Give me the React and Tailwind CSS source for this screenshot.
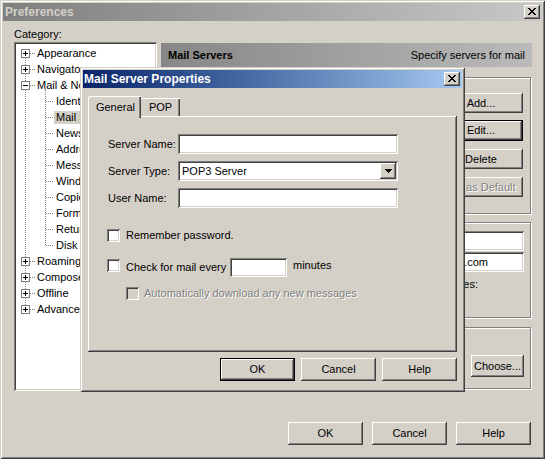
const raised =
  "shadow-[inset_-1px_-1px_0_#404040,inset_1px_1px_0_#ffffff,inset_-2px_-2px_0_#808080,inset_2px_2px_0_#d4d0c8]";
const sunken =
  "shadow-[inset_1px_1px_0_#808080,inset_-1px_-1px_0_#ffffff,inset_2px_2px_0_#404040,inset_-2px_-2px_0_#d4d0c8]";
const frame =
  "shadow-[inset_1px_1px_0_#d4d0c8,inset_-1px_-1px_0_#404040,inset_2px_2px_0_#ffffff,inset_-2px_-2px_0_#808080]";
const etched = "border border-[#808080] shadow-[inset_1px_1px_0_#ffffff,1px_1px_0_#ffffff]";
const disabledText = "text-[#808080] [text-shadow:1px_1px_0_#ffffff]";

function Button({ children, className = "", isDefault = false, disabled = false }) {
  return (
    <div
      className={`flex items-center justify-center bg-[#d4d0c8] whitespace-nowrap ${
        isDefault ? "border border-black" : ""
      } ${raised} ${className}`}
    >
      <span className={disabled ? disabledText : ""}>{children}</span>
    </div>
  );
}

function CloseGlyph() {
  const px = [
    [0, 0], [1, 0], [6, 0], [7, 0],
    [1, 1], [2, 1], [5, 1], [6, 1],
    [2, 2], [3, 2], [4, 2], [5, 2],
    [3, 3], [4, 3],
    [2, 4], [3, 4], [4, 4], [5, 4],
    [1, 5], [2, 5], [5, 5], [6, 5],
    [0, 6], [1, 6], [6, 6], [7, 6],
  ];
  return (
    <svg width="8" height="7" shapeRendering="crispEdges">
      {px.map(([x, y]) => (
        <rect key={`${x}-${y}`} x={x} y={y} width="1" height="1" fill="#000" />
      ))}
    </svg>
  );
}

function CloseButton() {
  return (
    <div className={`w-[16px] h-[14px] bg-[#d4d0c8] flex items-center justify-center pb-[1px] ${raised}`}>
      <CloseGlyph />
    </div>
  );
}

function DownArrow() {
  return (
    <svg width="7" height="4" shapeRendering="crispEdges">
      <rect x="0" y="0" width="7" height="1" fill="#000" />
      <rect x="1" y="1" width="5" height="1" fill="#000" />
      <rect x="2" y="2" width="3" height="1" fill="#000" />
      <rect x="3" y="3" width="1" height="1" fill="#000" />
    </svg>
  );
}

function Field({ className = "", children }) {
  return (
    <div className={`bg-white p-[2px] flex items-center overflow-hidden whitespace-nowrap ${sunken} ${className}`}>
      {children}
    </div>
  );
}

function Checkbox({ disabled = false, className = "" }) {
  return (
    <span
      className={`w-[13px] h-[13px] shrink-0 ${disabled ? "bg-[#d4d0c8]" : "bg-white"} ${sunken} ${className}`}
    />
  );
}

function Expander({ open }) {
  return (
    <span className="relative block w-[9px] h-[9px] border border-[#808080] bg-white shrink-0">
      <span className="absolute left-[1px] top-[3px] w-[5px] h-[1px] bg-black" />
      {!open && <span className="absolute left-[3px] top-[1px] w-[1px] h-[5px] bg-black" />}
    </span>
  );
}

const tree = [
  { label: "Appearance", level: 0 },
  { label: "Navigator", level: 0 },
  { label: "Mail & Newsgroups", level: 0, open: true },
  { label: "Identity", level: 1 },
  { label: "Mail Servers", level: 1, selected: true },
  { label: "Newsgroup Servers", level: 1 },
  { label: "Addressing", level: 1 },
  { label: "Messages", level: 1 },
  { label: "Window Settings", level: 1 },
  { label: "Copies and Folders", level: 1 },
  { label: "Formatting", level: 1 },
  { label: "Return Receipts", level: 1 },
  { label: "Disk Space", level: 1 },
  { label: "Roaming Access", level: 0 },
  { label: "Composer", level: 0 },
  { label: "Offline", level: 0 },
  { label: "Advanced", level: 0 },
];

function Tree() {
  return (
    <div className={`flex-1 bg-white p-[2px] ${sunken}`}>
      <div className="relative h-full pt-[1px] overflow-hidden">
        <span className="absolute left-[9px] top-[9px] h-[256px] border-l border-dotted border-[#808080]" />
        <span className="absolute left-[29px] top-[45px] h-[156px] border-l border-dotted border-[#808080]" />
        {tree.map((item) => (
          <div key={item.label} className="relative h-[16px] flex items-center">
            {item.level === 0 ? (
              <>
                <span className="ml-[5px] relative">
                  <Expander open={item.open} />
                </span>
                <span className="w-[5px] border-t border-dotted border-[#808080]" />
                <span className="ml-[2px] leading-[13px] whitespace-nowrap">{item.label}</span>
              </>
            ) : (
              <>
                <span className="ml-[30px] w-[7px] border-t border-dotted border-[#808080]" />
                <span
                  className={`ml-[1px] px-[2px] leading-[13px] whitespace-nowrap ${
                    item.selected ? "bg-[#d4d0c8]" : ""
                  }`}
                >
                  {item.label}
                </span>
              </>
            )}
          </div>
        ))}
      </div>
    </div>
  );
}

function ServerDialog() {
  return (
    <div className={`absolute left-[80px] top-[67px] w-[385px] h-[325px] bg-[#d4d0c8] p-[3px] flex flex-col ${frame}`}>
      <div className="h-[18px] bg-linear-to-r from-[#0a246a] to-[#a6caf0] flex items-center justify-between pl-[1px] pr-[2px]">
        <span className="font-bold text-[12px] text-white leading-[13px]">Mail Server Properties</span>
        <CloseButton />
      </div>

      <div className="mt-[8px] mx-[5px] h-[20px] flex items-start relative z-10">
        <div className="w-[53px] h-[22px] bg-[#d4d0c8] rounded-tl-[2px] flex items-center justify-center pl-[2px] shadow-[inset_1px_1px_0_#ffffff,inset_-1px_0_0_#404040,inset_-2px_0_0_#808080]">
          General
        </div>
        <div className="mt-[2px] w-[39px] h-[18px] bg-[#d4d0c8] flex items-center justify-center pt-[1px] shadow-[inset_0_1px_0_#ffffff,inset_-1px_0_0_#404040,inset_-2px_0_0_#808080]">
          POP
        </div>
      </div>

      <div className={`mx-[5px] h-[236px] bg-[#d4d0c8] pl-[19px] pt-[18px] flex flex-col ${raised}`}>
        <div className="flex items-center h-[20px]">
          <span className="w-[71px] pl-[1px]">Server Name:</span>
          <Field className="w-[220px] h-[20px]" />
        </div>
        <div className="flex items-center h-[20px] mt-[7px]">
          <span className="w-[71px] pl-[1px]">Server Type:</span>
          <Field className="w-[220px] h-[20px] items-stretch">
            <span className="flex-1 pl-[2px] flex items-center">POP3 Server</span>
            <span className={`w-[16px] bg-[#d4d0c8] flex items-center justify-center ${raised}`}>
              <DownArrow />
            </span>
          </Field>
        </div>
        <div className="flex items-center h-[20px] mt-[7px]">
          <span className="w-[71px] pl-[1px]">User Name:</span>
          <Field className="w-[220px] h-[20px]" />
        </div>

        <div className="flex items-center h-[13px] mt-[21px]">
          <Checkbox />
          <span className="ml-[6px]">Remember password.</span>
        </div>

        <div className="flex items-start h-[19px] mt-[16px]">
          <Checkbox className="mt-[1px]" />
          <span className="ml-[6px] w-[104px] mt-[3px] leading-[13px]">Check for mail every</span>
          <Field className="w-[57px] h-[19px]" />
          <span className="ml-[6px] mt-[1px] leading-[13px]">minutes</span>
        </div>

        <div className="flex items-center h-[13px] mt-[10px] ml-[19px]">
          <Checkbox disabled className="w-[12px] h-[12px]" />
          <span className={`ml-[5px] ${disabledText}`}>Automatically download any new messages</span>
        </div>
      </div>

      <div className="mt-[6px] mr-[5px] flex justify-end gap-[6px]">
        <Button isDefault className="w-[75px] h-[23px]">OK</Button>
        <Button className="w-[75px] h-[23px]">Cancel</Button>
        <Button className="w-[75px] h-[23px]">Help</Button>
      </div>
    </div>
  );
}

export default function App() {
  return (
    <div
      className={`relative w-[545px] h-[459px] overflow-hidden bg-[#d4d0c8] p-[3px] flex flex-col text-[11px] leading-[13px] text-black font-['Liberation_Sans',Arial,sans-serif] ${frame}`}
    >
      <div className="h-[18px] shrink-0 bg-linear-to-r from-[#808080] to-[#c8c8c8] flex items-center justify-between pl-[2px] pr-[2px]">
        <span className="font-bold text-[12px] text-[#d4d0c8]">Preferences</span>
        <CloseButton />
      </div>

      <div className="flex-1 flex flex-col pl-[11px] pr-[10px]">
        <div className="h-[370px] flex gap-[4px]">
          <div className="w-[143px] flex flex-col">
            <div className="h-[21px] pt-[7px]">Category:</div>
            <Tree />
          </div>

          <div className="flex-1 flex flex-col pt-[22px]">
            <div className="h-[24px] bg-linear-to-r from-[#878787] to-[#bababa] flex items-center justify-between px-[7px]">
              <span className="font-bold">Mail Servers</span>
              <span>Specify servers for mail</span>
            </div>

            <div className={`mt-[10px] mr-[1px] h-[137px] flex pt-[15px] pr-[7px] pl-[8px] ${etched}`}>
              <div className={`flex-1 mr-[8px] mb-[10px] bg-white ${sunken}`} />
              <div className="w-[84px] flex flex-col gap-[8px]">
                <Button className="h-[20px]">Add...</Button>
                <Button isDefault className="h-[21px] -mt-[1px]">Edit...</Button>
                <Button className="h-[20px]">Delete</Button>
                <Button disabled className="h-[20px]">Set as Default</Button>
              </div>
            </div>

            <div className={`mt-[8px] mr-[1px] h-[96px] flex flex-col pt-[8px] pr-[6px] pl-[118px] ${etched}`}>
              <Field className="h-[20px]" />
              <Field className="h-[20px] mt-[1px] justify-end pr-[36px]">mail.example.com</Field>
              <div className="mt-[6px] flex justify-end pr-[46px]">
                <span>Use secure connection for messages:</span>
              </div>
            </div>

            <div className={`mt-[9px] mr-[1px] h-[62px] flex items-start pt-[27px] pr-[6px] pl-[8px] ${etched}`}>
              <Field className="flex-1 h-[20px] mr-[8px]">C:\Mail</Field>
              <Button className="w-[53px] h-[22px]">Choose...</Button>
            </div>
          </div>
        </div>

        <div className="mt-[31px] mr-[1px] flex justify-end gap-[9px]">
          <Button className="w-[75px] h-[23px]">OK</Button>
          <Button className="w-[75px] h-[23px]">Cancel</Button>
          <Button className="w-[75px] h-[23px]">Help</Button>
        </div>
      </div>

      <ServerDialog />
    </div>
  );
}
